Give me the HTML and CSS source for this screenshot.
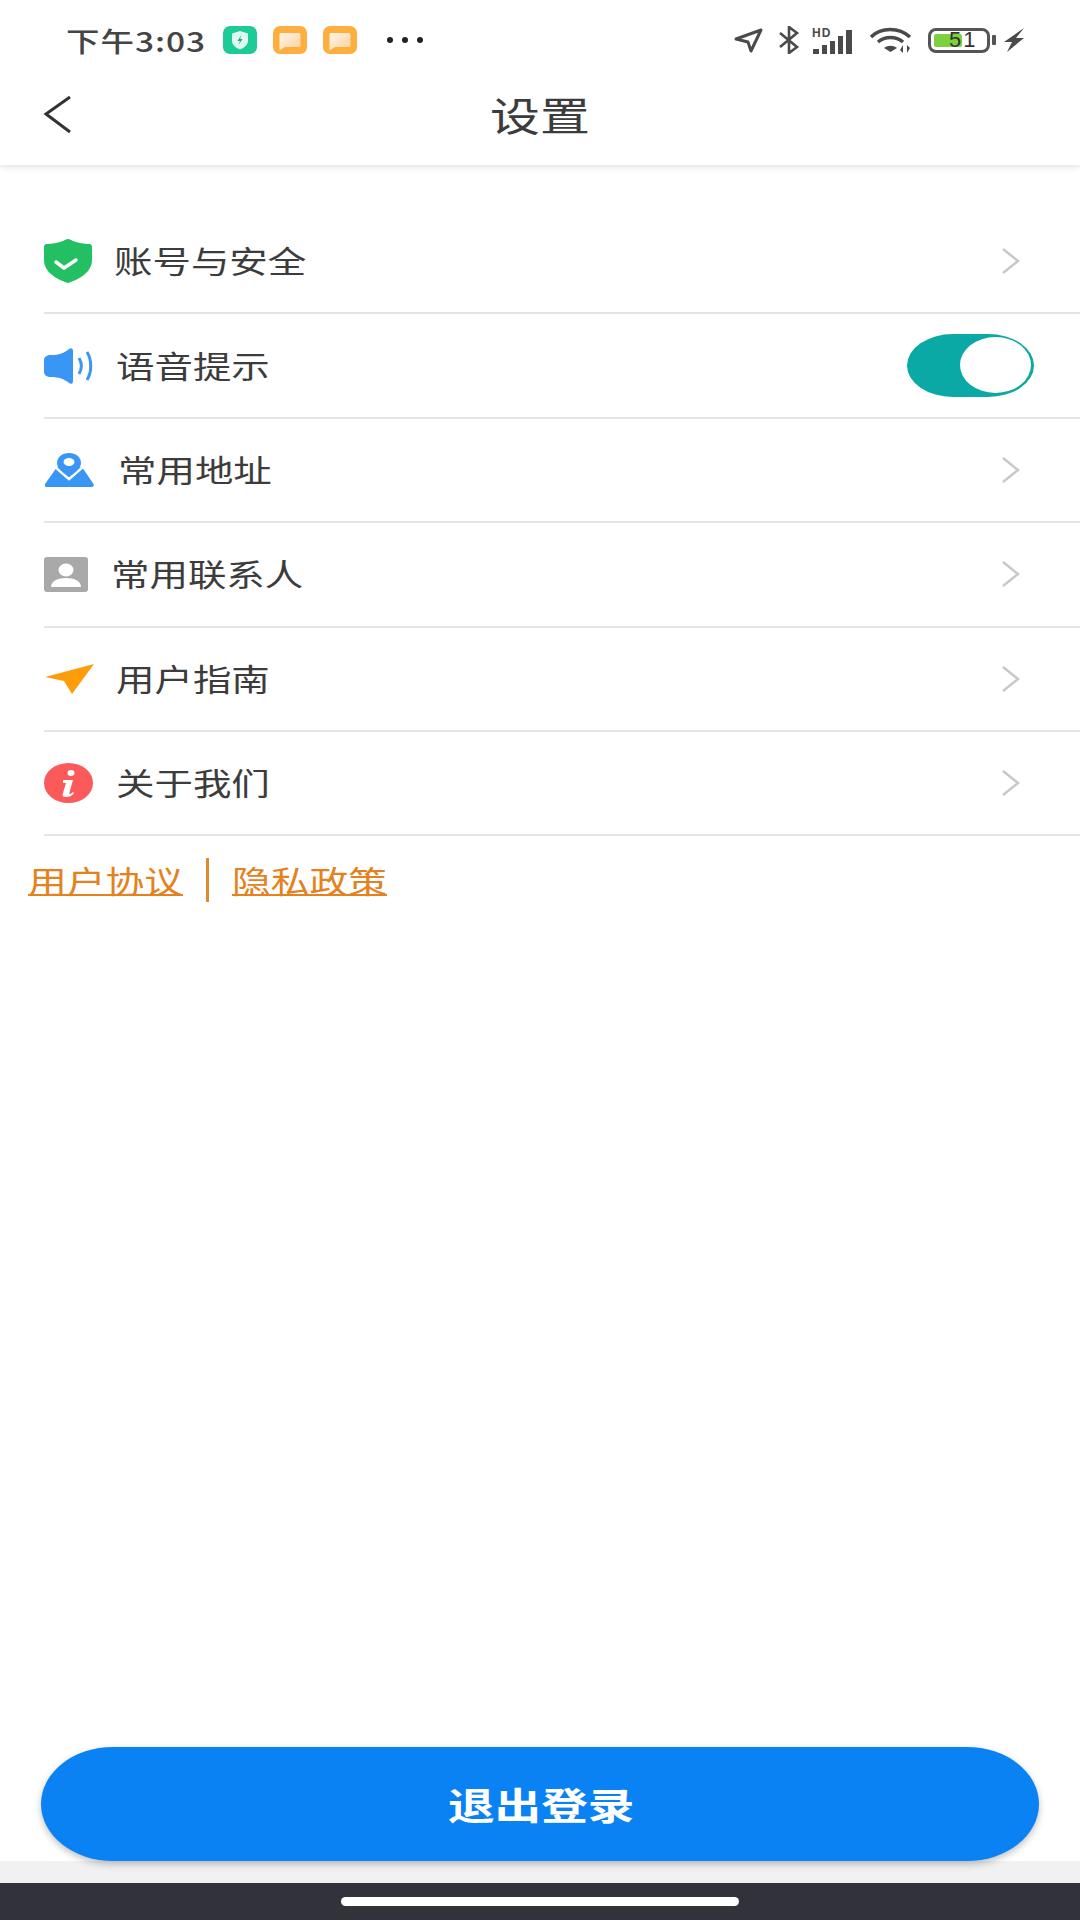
FILE: index.html
```html
<!DOCTYPE html>
<html lang="zh-CN">
<head>
  <meta charset="UTF-8" />
  <meta name="viewport" content="width=device-width, initial-scale=1.0" />
  <title>设置</title>
  <link rel="stylesheet" href="styles.css">
</head>
<body>
  <div class="status-bar">
    <span class="time wide">下午3:03</span>
    <svg class="app-icon" viewBox="0 0 34 28">
      <rect width="34" height="28" rx="7" fill="#1ccb97"/>
      <path d="M17 5l8 2.500v7c0 4.500-3.500 7-8 9-4.500-2-8-4.500-8-9v-7z" fill="#dff9f0"/>
      <path d="M18.500 9l-4 6h2.500l-1.500 4 4-6H17z" fill="#1ca883"/>
    </svg>
    <svg class="app-icon" viewBox="0 0 34 28">
      <defs>
        <linearGradient id="bubble" x1="0" y1="0" x2="1" y2="1">
          <stop offset="0" stop-color="#fff6ea"/>
          <stop offset="1" stop-color="#f9cf9a"/>
        </linearGradient>
      </defs>
      <rect width="34" height="28" rx="7" fill="#fdae3e"/>
      <path d="M8 7h18a1.500 1.500 0 0 1 1.500 1.500v11a1.500 1.500 0 0 1-1.500 1.500H12l-5.500 3.500V8.500A1.500 1.500 0 0 1 8 7z" fill="url(#bubble)"/>
    </svg>
    <svg class="app-icon" viewBox="0 0 34 28">
      <rect width="34" height="28" rx="7" fill="#fdae3e"/>
      <path d="M8 7h18a1.500 1.500 0 0 1 1.500 1.500v11a1.500 1.500 0 0 1-1.500 1.500H12l-5.500 3.500V8.500A1.500 1.500 0 0 1 8 7z" fill="url(#bubble)"/>
    </svg>
    <div class="dots"><i></i><i></i><i></i></div>
    <div class="status-right">
      <svg class="s-nav" viewBox="0 0 30 26">
        <path d="M2 12L27 3 17 24l-3-9z" fill="none" stroke="#4a4a4a" stroke-width="3" stroke-linejoin="round"/>
      </svg>
      <svg class="s-bt" viewBox="0 0 22 28">
        <path d="M2 7l17 14-8 6V1l8 6L2 21" fill="none" stroke="#4a4a4a" stroke-width="2.600"/>
      </svg>
      <svg class="s-signal" viewBox="0 0 42 28">
        <text x="0" y="11" class="hd">HD</text>
        <rect x="1" y="23" width="6" height="5" fill="#4a4a4a"/>
        <rect x="10" y="19" width="5" height="9" fill="#4a4a4a"/>
        <rect x="18" y="15" width="5" height="13" fill="#4a4a4a"/>
        <rect x="26" y="10" width="5" height="18" fill="#4a4a4a"/>
        <rect x="34" y="4" width="6" height="24" fill="#4a4a4a"/>
      </svg>
      <svg class="s-wifi" viewBox="0 0 42 26">
        <path d="M1 10C11 0 29 0 40 10M8 15c7-6 18-6 25 0" fill="none" stroke="#4a4a4a" stroke-width="3.500"/>
        <path d="M14 21c4-3 9-3 13 0l-6.500 4z" fill="#4a4a4a"/>
        <path d="M33 18v8l-3-3zM37 18v8l3-5z" fill="#4a4a4a"/>
      </svg>
      <div class="battery">
        <div class="battery-body">
          <div class="battery-fill"></div>
          <span class="battery-num">51</span>
        </div>
        <div class="battery-tip"></div>
      </div>
      <svg class="s-bolt" viewBox="0 0 20 24">
        <path d="M20 0L0 14h8L3 24l17-14h-8z" fill="#4a4a4a"/>
      </svg>
    </div>
  </div>

  <header class="title-bar">
    <svg class="back" viewBox="0 0 28 40">
      <path d="M27 2L3 19l24 18" fill="none" stroke="#333" stroke-width="3"/>
    </svg>
    <h1 class="title">设置</h1>
  </header>

  <main class="menu">
    <div class="row">
      <div class="icon-slot s1">
        <svg class="ic" width="48" height="44" viewBox="0 0 48 44">
          <path d="M24 0c2 0 3 1 5 2 5 2 11 3 16 3 2 0 3 1 3 3v13c0 12-12 19-24 23C12 40 0 33 0 21V8c0-2 1-3 3-3 5 0 11-1 16-3 2-1 3-2 5-2z" fill="#22c063"/>
          <path d="M12 23l8 6 12-8" fill="none" stroke="#fff" stroke-width="3.500" stroke-linecap="round" stroke-linejoin="round"/>
        </svg>
      </div>
      <span class="label wide">账号与安全</span>
      <svg class="chevron" viewBox="0 0 18 26"><path d="M1 1l15 12L1 25" fill="none" stroke="#c8c8c8" stroke-width="2.500"/></svg>
    </div>
    <div class="row">
      <div class="icon-slot s2">
        <svg class="ic" width="50" height="36" viewBox="0 0 50 36">
          <path d="M7 7c8 0 13-2 18-6 2-1.500 4-1 4 2v30c0 3-2 3.500-4 2-5-4-10-6-18-6-4 0-7-2-7-5V12c0-3 3-5 7-5z" fill="#3a96f5"/>
          <path d="M35 10c3 5 3 11 0 16M43 4c5 8 5 20 0 28" fill="none" stroke="#3a96f5" stroke-width="3"/>
        </svg>
      </div>
      <span class="label wide">语音提示</span>
      <div class="switch"><div class="knob"></div></div>
    </div>
    <div class="row">
      <div class="icon-slot s3">
        <svg class="ic" width="49" height="34" viewBox="0 0 49 34">
          <path d="M13 14h23c1 0 1.500.500 2 1.500l10.500 15.500c.500 1.500 0 3-2 3H2c-2 0-2.500-1.500-2-3l11-15.500c.500-1 1-1.500 2-1.500z" fill="#3a96f5"/>
          <path d="M9 13l15 13 15-13" fill="none" stroke="#fff" stroke-width="2.500"/>
          <path d="M24 0c6.500 0 12 4 12 10 0 5-5.500 9.500-12 14C17.500 19.500 12 15 12 10 12 4 17.500 0 24 0z" fill="#3a96f5"/>
          <ellipse cx="24" cy="9" rx="5.500" ry="4" fill="#fff"/>
        </svg>
      </div>
      <span class="label wide">常用地址</span>
      <svg class="chevron" viewBox="0 0 18 26"><path d="M1 1l15 12L1 25" fill="none" stroke="#c8c8c8" stroke-width="2.500"/></svg>
    </div>
    <div class="row">
      <div class="icon-slot s4">
        <svg class="ic" width="44" height="35" viewBox="0 0 44 35">
          <rect width="44" height="35" rx="3" fill="#a9a9a9"/>
          <ellipse cx="22" cy="13" rx="7.500" ry="6.500" fill="#fff"/>
          <path d="M7 30c0-6 7-9 15-9s15 3 15 9z" fill="#fff"/>
        </svg>
      </div>
      <span class="label wide">常用联系人</span>
      <svg class="chevron" viewBox="0 0 18 26"><path d="M1 1l15 12L1 25" fill="none" stroke="#c8c8c8" stroke-width="2.500"/></svg>
    </div>
    <div class="row">
      <div class="icon-slot s5">
        <svg class="ic" width="49" height="30" viewBox="0 0 49 30">
          <path d="M49 0L27 30 19 17 0 13z" fill="#ff9c0a"/>
        </svg>
      </div>
      <span class="label wide">用户指南</span>
      <svg class="chevron" viewBox="0 0 18 26"><path d="M1 1l15 12L1 25" fill="none" stroke="#c8c8c8" stroke-width="2.500"/></svg>
    </div>
    <div class="row">
      <div class="icon-slot s6">
        <svg class="ic" width="49" height="40" viewBox="0 0 49 40">
          <ellipse cx="24.500" cy="20" rx="24.500" ry="20" fill="#fb5a5a"/>
          <ellipse cx="27" cy="10" rx="3.500" ry="3" fill="#fff"/>
          <path d="M19 17h10l-4 14c2 0 3-1 4-2l1 1c-2 3-5 4-8 4-3 0-4-1-3-4l3-10h-3z" fill="#fff"/>
        </svg>
      </div>
      <span class="label wide">关于我们</span>
      <svg class="chevron" viewBox="0 0 18 26"><path d="M1 1l15 12L1 25" fill="none" stroke="#c8c8c8" stroke-width="2.500"/></svg>
    </div>
  </main>

  <div class="links">
    <a class="link wide" href="#">用户协议</a>
    <div class="link-sep"></div>
    <a class="link wide" href="#">隐私政策</a>
  </div>

  <div class="spacer"></div>

  <button class="logout"><span class="wide">退出登录</span></button>
  <div class="strip"></div>
  <div class="nav-bar"><div class="home-pill"></div></div>
</body>
</html>
```

FILE: styles.css
```css
* {
  box-sizing: border-box;
}
html, body {
  height: 100%;
}
body {
  margin: 0;
  height: 1920px;
  display: flex;
  flex-direction: column;
  background-color: #fff;
  color: #3c3c3c;
  font-family: "Noto Sans CJK SC", "Noto Sans", sans-serif;
  overflow: hidden;
}

/* the shot is stretched sideways, so the type is too */
.wide {
  display: inline-block;
  transform: scaleX(1.24);
  transform-origin: left center;
  white-space: nowrap;
}

.status-bar {
  height: 66px;
  flex: none;
  display: flex;
  align-items: center;
  padding: 14px 56px 0 66px;
  background-color: #fff;
  position: relative;
  z-index: 1;
}
.time {
  width: 157px;
  font-size: 27px;
  font-weight: 500;
  letter-spacing: 0.8px;
  color: #444;
}
.app-icon {
  width: 34px;
  height: 28px;
  margin-right: 16px;
}
.dots {
  display: flex;
  gap: 9px;
  margin-left: 14px;
}
.dots i {
  width: 6px;
  height: 6px;
  border-radius: 50%;
  background-color: #222;
}
.status-right {
  margin-left: auto;
  display: flex;
  align-items: center;
}
.s-nav {
  width: 30px;
  height: 26px;
}
.s-bt {
  width: 22px;
  height: 28px;
  margin-left: 14px;
}
.s-signal {
  width: 42px;
  height: 28px;
  margin-left: 12px;
}
.hd {
  font-family: "Liberation Sans", sans-serif;
  font-size: 12px;
  font-weight: 700;
  letter-spacing: 1px;
  fill: #4a4a4a;
}
.s-wifi {
  width: 42px;
  height: 26px;
  margin-left: 16px;
}
.battery {
  display: flex;
  align-items: center;
  margin-left: 16px;
}
.battery-body {
  position: relative;
  width: 62px;
  height: 25px;
  border: 3px solid #555;
  border-radius: 8px;
  padding: 3px;
}
.battery-fill {
  width: 28px;
  height: 100%;
  background-color: #7ed13e;
  border-radius: 2px;
}
.battery-num {
  position: absolute;
  left: 18px;
  top: 50%;
  transform: translateY(-50%);
  font-family: "Liberation Sans", sans-serif;
  font-size: 22px;
  letter-spacing: 2px;
  line-height: 1;
  color: #333;
}
.battery-tip {
  width: 4px;
  height: 10px;
  margin-left: 2px;
  background-color: #555;
  border-radius: 1px;
}
.s-bolt {
  width: 20px;
  height: 24px;
  margin-left: 8px;
}

.title-bar {
  height: 99px;
  flex: none;
  position: relative;
  display: flex;
  align-items: center;
  justify-content: center;
  padding-bottom: 4px;
  box-shadow: 0 2px 6px rgba(0, 0, 0, 0.12);
}
.back {
  position: absolute;
  left: 43px;
  top: 29px;
  width: 28px;
  height: 40px;
}
.title {
  margin: 0 0 0 -3px;
  width: 97px;
  font-size: 40px;
  font-weight: 400;
  line-height: 1;
  white-space: nowrap;
  color: #3c3c3c;
  transform: scaleX(1.25);
  transform-origin: left center;
}

.menu {
  margin: 45px 0 0 44px;
  flex: none;
}
.row {
  height: 104.4px;
  display: flex;
  align-items: center;
  padding-right: 60px;
  border-bottom: 2px solid #e4e4e4;
}
.icon-slot {
  flex: none;
  display: flex;
}
.ic {
  display: block;
}
.s1 { width: 70px; }
.s2 { width: 72px; }
.s3 { width: 74px; padding-left: 1px; }
.s4 { width: 67px; }
.s5 { width: 72px; padding-left: 1px; }
.s6 { width: 72px; }
.label {
  margin-top: -3px;
  font-size: 31px;
  line-height: 1;
  color: #3c3c3c;
}
.chevron {
  width: 18px;
  height: 26px;
  margin-left: auto;
}
.switch {
  width: 127px;
  height: 63px;
  margin-left: auto;
  margin-right: -14px;
  padding: 3px 3px 0 0;
  display: flex;
  justify-content: flex-end;
  background-color: #0aa9a5;
  border-radius: 46px / 50%;
}
.knob {
  width: 71px;
  height: 56px;
  background-color: #fff;
  border-radius: 50%;
}

.links {
  flex: none;
  display: flex;
  align-items: center;
  height: 44px;
  margin-top: 22px;
  padding-left: 28px;
}
.link {
  width: 156px;
  font-size: 31px;
  line-height: 1.1;
  color: #e4821e;
  text-decoration: underline;
  text-decoration-thickness: 2px;
  transform: scaleX(1.25);
}
.link-sep {
  width: 3px;
  height: 44px;
  margin: 0 23px 0 22px;
  background-color: #e08a30;
}

.spacer {
  flex: 1;
}

.logout {
  flex: none;
  height: 114px;
  margin: 0 41px;
  border: none;
  padding: 0;
  background-color: #0b82f3;
  color: #fff;
  font-family: inherit;
  font-size: 37px;
  font-weight: 700;
  border-radius: 72px / 57px;
  box-shadow: 0 3px 7px rgba(0, 0, 0, 0.25);
  position: relative;
}
.logout span {
  width: 185px;
  transform: scaleX(1.26);
  text-align: left;
}
.strip {
  flex: none;
  height: 22px;
  background-color: #f1f1f1;
}
.nav-bar {
  flex: none;
  height: 37px;
  display: flex;
  justify-content: center;
  padding-top: 14px;
  background-color: #32323a;
}
.home-pill {
  width: 398px;
  height: 9px;
  background-color: #fff;
  border-radius: 5px;
}
```
